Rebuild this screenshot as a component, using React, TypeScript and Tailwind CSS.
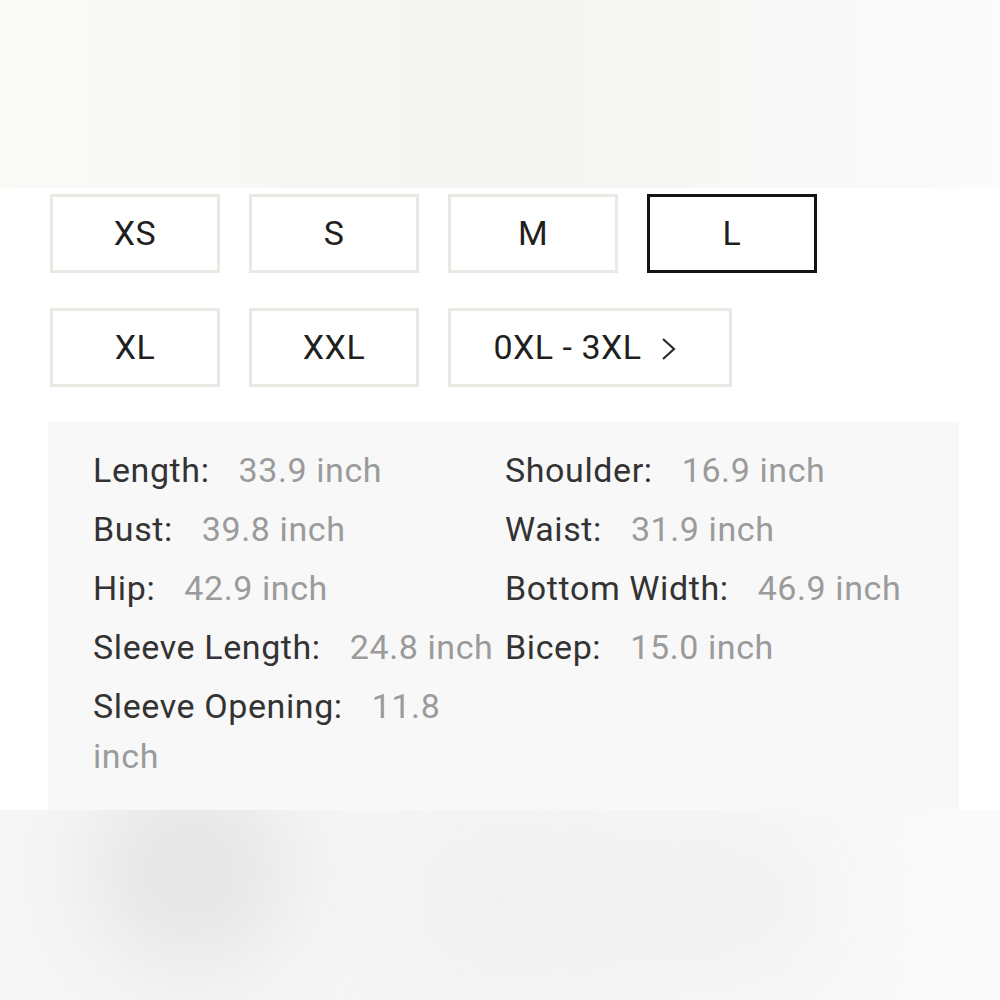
import React from "react";

type Size = { label: string; selected?: boolean; wide?: boolean; more?: boolean };

const sizes: Size[][] = [
  [{ label: "XS" }, { label: "S" }, { label: "M" }, { label: "L", selected: true }],
  [{ label: "XL" }, { label: "XXL" }, { label: "0XL - 3XL", wide: true, more: true }],
];

const measures: [string, string][] = [
  ["Length:", "33.9 inch"],
  ["Shoulder:", "16.9 inch"],
  ["Bust:", "39.8 inch"],
  ["Waist:", "31.9 inch"],
  ["Hip:", "42.9 inch"],
  ["Bottom Width:", "46.9 inch"],
  ["Sleeve Length:", "24.8 inch"],
  ["Bicep:", "15.0 inch"],
  ["Sleeve Opening:", "11.8 inch"],
];

function SizeButton({ s }: { s: Size }) {
  return (
    <button
      className={
        "h-[79px] flex items-center justify-center border-[3px] bg-white text-[34px] tracking-[0.5px] text-[#1f1f1f] " +
        (s.wide ? "w-[284px] " : "w-[170px] ") +
        (s.selected ? "border-[#141414]" : "border-[#e9e8e3]")
      }
    >
      <span>{s.label}</span>
      {s.more && (
        <svg className="ml-[17px] mt-[2px]" width="28" height="24" viewBox="0 0 28 24" fill="none">
          <polyline points="4,2 15,12 4,22" stroke="#2a2a2a" strokeWidth="2.2" strokeLinejoin="miter" />
        </svg>
      )}
    </button>
  );
}

export default function App() {
  return (
    <div
      className="relative w-[1000px] h-[1000px] flex flex-col overflow-hidden bg-white"
      style={{ fontFamily: "Roboto, 'Noto Sans', sans-serif" }}
    >
      {/* soft header backdrop */}
      <div className="h-[188px] bg-gradient-to-r from-[#fafaf7] via-[#f4f4f2] to-[#fbfbfb]" />

      <div className="flex flex-col pt-[6px]">
        <div className="flex flex-col gap-[35px] pl-[50px]">
          {sizes.map((row, i) => (
            <div key={i} className="flex gap-[29px]">
              {row.map((s) => (
                <SizeButton key={s.label} s={s} />
              ))}
            </div>
          ))}
        </div>

        <div className="ml-[48px] mt-[35px] w-[911px] h-[388px] bg-[#f8f8f8] pl-[45px] pt-[23px]">
          <div className="grid grid-cols-[412px_412px] gap-y-[9px] text-[34px] leading-[50px] tracking-[0.6px]">
            {measures.map(([k, v]) => (
              <div key={k}>
                <span className="text-[#333333]">{k}</span>
                <span className="ml-[29px] text-[#9b9b9b]">{v}</span>
              </div>
            ))}
          </div>
        </div>
      </div>

      {/* soft footer backdrop */}
      <div className="relative flex-1 bg-gradient-to-r from-[#f6f6f6] via-[#f5f5f5] to-[#fafafa] overflow-hidden">
        <div className="absolute left-[90px] top-[-40px] w-[200px] h-[200px] rounded-full bg-[#e6e6e6] blur-2xl" />
        <div className="absolute left-[420px] top-[20px] w-[400px] h-[140px] rounded-full bg-[#f1f1f1] blur-2xl" />
      </div>
    </div>
  );
}
